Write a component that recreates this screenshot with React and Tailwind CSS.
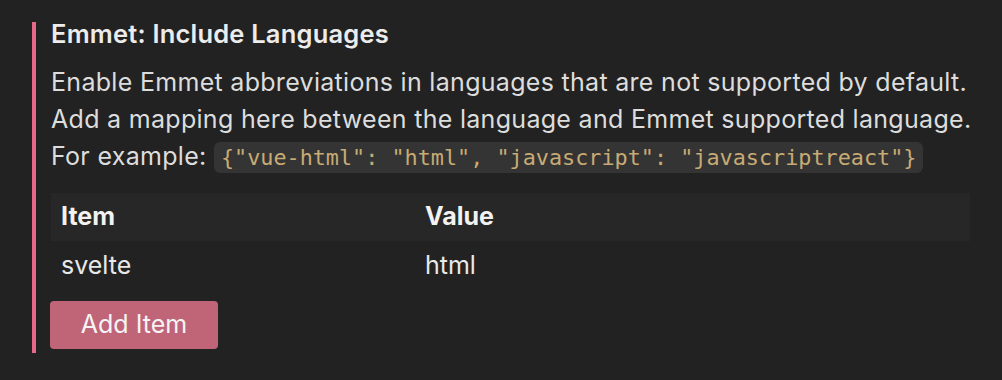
const rows = [{ item: 'svelte', value: 'html' }];

export default function App() {
  return (
    <div className="w-[1002px] h-[380px] bg-[#222222] pt-[22px] pl-[32px] font-['Inter',sans-serif]">
      <div className="flex h-[331px] border-l-4 border-[#e8688a] pl-[15px] pr-[20px]">
        <div className="flex-1 flex flex-col">
          <h2 className="text-[25.5px] leading-[24px] font-semibold tracking-[0.2px] text-[#ececec]">
            Emmet: Include Languages
          </h2>
          <p className="mt-[18px] whitespace-nowrap text-[25px] leading-[37px] tracking-[0.3px] text-[#dddddd]">
            Enable Emmet abbreviations in languages that are not supported by default.
            <br />
            Add a mapping here between the language and Emmet supported language.
            <br />
            For example:{' '}
            <code className="rounded-[6px] bg-[#343434] px-[7px] py-[3px] font-['DejaVu_Sans_Mono',monospace] text-[21.8px] tracking-normal text-[#c8ab74]">
              {'{"vue-html": "html", "javascript": "javascriptreact"}'}
            </code>
          </p>
          <div className="mt-[17px] w-[919px]">
            <div className="flex h-[48px] items-center bg-[#272727] px-[10px] text-[25px] font-bold text-[#f2f2f2]">
              <div className="w-[364px]">Item</div>
              <div>Value</div>
            </div>
            {rows.map(r => (
              <div key={r.item} className="flex h-[50px] items-center px-[10px] text-[25px] text-[#e8e8e8]">
                <div className="w-[364px]">{r.item}</div>
                <div>{r.value}</div>
              </div>
            ))}
          </div>
          <button className="-ml-[1px] mt-[10px] h-[48px] w-[168px] shrink-0 rounded-[4px] bg-[#c06478] text-[25px] text-[#f4f4f4]">
            Add Item
          </button>
        </div>
      </div>
    </div>
  );
}
